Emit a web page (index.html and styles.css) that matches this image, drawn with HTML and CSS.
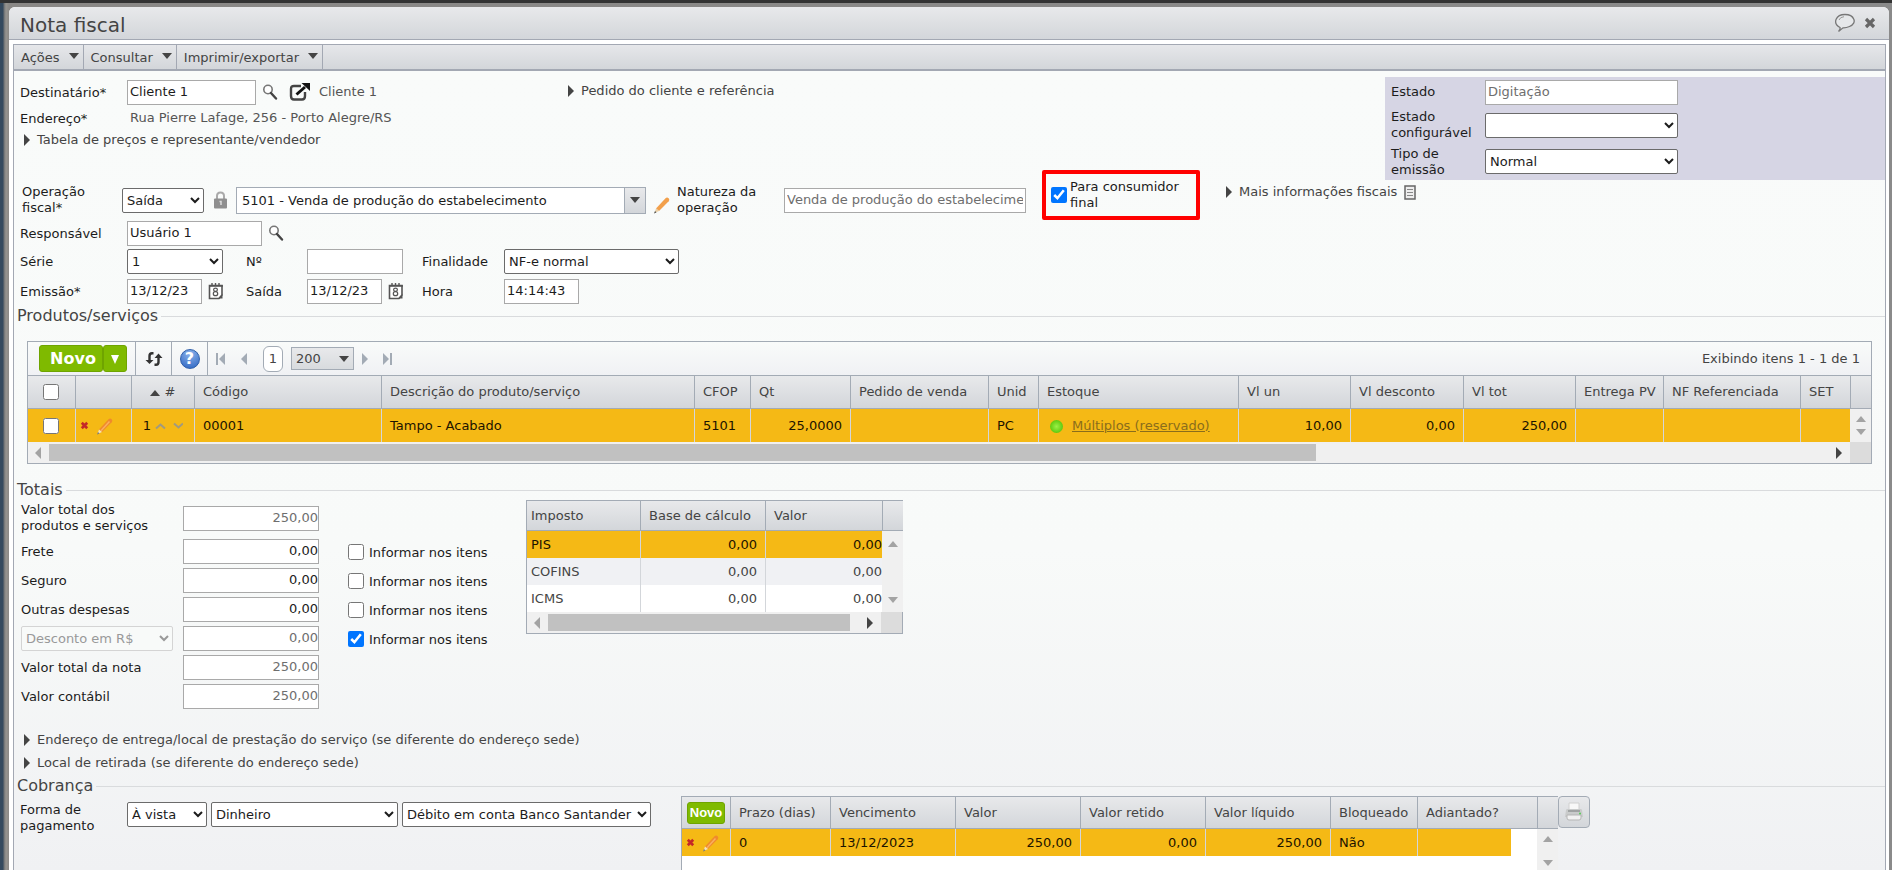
FILE: index.html
```
<!DOCTYPE html>
<html lang="pt-BR">
<head>
<meta charset="utf-8">
<meta name="viewport" content="width=device-width, initial-scale=1.0">
<title>Nota fiscal</title>
<link rel="stylesheet" href="styles.css">
</head>
<body>
<!-- shared icons -->
<svg class="sprite">
  <symbol id="i-search" viewBox="0 0 16 16"><circle cx="6" cy="5.5" r="4.2" fill="#fff" stroke="#777" stroke-width="1.6"/><path d="M9 9l5 5.5" stroke="#444" stroke-width="2.4" stroke-linecap="round"/></symbol>
  <symbol id="i-cal" viewBox="0 0 16 18"><path d="M1.5 3.5h12.5v9.500l-3 3.500h-9.500z" fill="#fff" stroke="#555" stroke-width="1.6"/><path d="M1 4h14M4 1v3M7.500 1v3M11 1v3" stroke="#555" stroke-width="1.4"/><ellipse cx="7.500" cy="7.800" rx="1.900" ry="1.600" fill="none" stroke="#555" stroke-width="1.200"/><ellipse cx="7.500" cy="11.700" rx="2.200" ry="2" fill="none" stroke="#555" stroke-width="1.200"/><path d="M10 16.500l4.500-4.500v4.500z" fill="#555"/></symbol>
  <symbol id="i-pencil" viewBox="0 0 18 18"><path d="M3 12.500L12.500 2.200q1.500-1.500 3.200 0q1.300 1.600 0 3.100L6 15z" fill="#f2a04c"/><path d="M3 12.500l3 2.500-4.500 2z" fill="#e8cfa6"/><path d="M1 17.500l2.500-1-1.500-1.500z" fill="#555"/></symbol>
  <symbol id="i-pencil-row" viewBox="0 0 18 18"><path d="M3 12.500L12.500 2.200q1.500-1.500 3.200 0q1.300 1.600 0 3.100L6 15z" fill="#f08a2c"/><path d="M13.500 4.500L5 13.800" stroke="#f9b060" stroke-width="1.500"/><path d="M3 12.500l3 2.500-4.500 2z" fill="#f3e2bd"/><path d="M1 17.500l2.500-1-1.500-1.500z" fill="#777"/></symbol>
  <symbol id="i-del" viewBox="0 0 10 10"><path d="M2 2l6 6M8 2l-6 6" stroke="#c52828" stroke-width="3"/></symbol>
  <symbol id="i-right" viewBox="0 0 6 12"><path d="M0 0l6 6-6 6z" fill="currentColor"/></symbol>
  <symbol id="i-left" viewBox="0 0 6 12"><path d="M6 0L0 6l6 6z" fill="currentColor"/></symbol>
  <symbol id="i-down" viewBox="0 0 10 6"><path d="M0 0h10L5 6z" fill="currentColor"/></symbol>
  <symbol id="i-up" viewBox="0 0 10 6"><path d="M0 6h10L5 0z" fill="currentColor"/></symbol>
</svg>

<div class="window">
  <header class="titlebar">
    <h1>Nota fiscal</h1>
    <button class="icon-btn" aria-label="Comentários"><svg width="22" height="20" viewBox="0 0 22 20"><path d="M6 14.500C-2 10 2 1.500 11 1.500s13 8.500 4.500 12q-3.500 1.500-6.500 1.300L4.500 18.500Q6.500 16.500 6 14.500z" fill="#e6e8ea" stroke="#777" stroke-width="1.300"/><path d="M5 7q1-3 5-3.300" fill="none" stroke="#999"/></svg></button>
    <button class="icon-btn" aria-label="Fechar"><svg width="12" height="12" viewBox="0 0 12 12"><path d="M2 2l8 8M10 2l-8 8" stroke="#666" stroke-width="3.200"/></svg></button>
  </header>

  <nav class="menu">
    <button>Ações <svg width="10" height="6"><use href="#i-down"/></svg></button>
    <button>Consultar <svg width="10" height="6"><use href="#i-down"/></svg></button>
    <button>Imprimir/exportar <svg width="10" height="6"><use href="#i-down"/></svg></button>
  </nav>

  <main class="content">
    <div class="top">
      <div class="recipient">
        <div class="row">
          <label class="lbl" for="dest">Destinatário*</label>
          <input class="w-dest" id="dest" value="Cliente 1">
          <button class="icon-btn find" aria-label="Buscar destinatário"><svg width="16" height="16"><use href="#i-search"/></svg></button>
          <button class="icon-btn open" aria-label="Abrir cadastro"><svg width="22" height="18" viewBox="0 0 22 18"><path d="M12 3H5Q2 3 2 6v7q0 3.500 3 3.500h8q3 0 3-3.500V9" fill="none" stroke="#444" stroke-width="2.400"/><path d="M7.500 11.500L16 4" stroke="#111" stroke-width="3"/><path d="M12.500 0H21v8z" fill="#111"/></svg></button>
          <span class="soft">Cliente 1</span>
        </div>
        <div class="row address">
          <span class="lbl">Endereço*</span>
          <span class="soft">Rua Pierre Lafage, 256 - Porto Alegre/RS</span>
        </div>
        <a class="toggle" href="#"><svg width="6" height="12"><use href="#i-right"/></svg>Tabela de preços e representante/vendedor</a>
      </div>
      <div class="order">
        <a class="toggle" href="#"><svg width="6" height="12"><use href="#i-right"/></svg>Pedido do cliente e referência</a>
      </div>
      <div class="status">
        <label for="estado">Estado</label>
        <input id="estado" class="muted" value="Digitação" readonly>
        <label for="config">Estado configurável</label>
        <select id="config"><option></option></select>
        <label for="tipo">Tipo de emissão</label>
        <select id="tipo"><option>Normal</option></select>
      </div>
    </div>

    <div class="row operation">
      <label class="lbl" for="oper">Operação fiscal*</label>
      <select id="oper"><option>Saída</option></select>
      <svg class="lock" width="15" height="18" viewBox="0 0 15 18"><path d="M4 8V5q0-3.500 3.500-3.500T11 5v3" fill="none" stroke="#aaa" stroke-width="2"/><rect x="1" y="7.500" width="13" height="10" rx="1" fill="#8f8f8f"/><path d="M6.500 10.500h1.500V14" fill="none" stroke="#ddd" stroke-width="1.500"/></svg>
      <div class="combo">
        <input aria-label="Código da operação" value="5101 - Venda de produção do estabelecimento">
        <button aria-label="Abrir lista"><svg width="10" height="6"><use href="#i-down"/></svg></button>
      </div>
      <button class="icon-btn edit-op" aria-label="Editar operação"><svg width="18" height="18"><use href="#i-pencil"/></svg></button>
      <label class="nature-lbl" for="natureza">Natureza da operação</label>
      <input id="natureza" class="muted" value="Venda de produção do estabelecimento" readonly>
      <label class="consumer"><input type="checkbox" checked><span>Para consumidor final</span></label>
      <a class="toggle more" href="#"><svg width="6" height="12"><use href="#i-right"/></svg>Mais informações fiscais<svg width="12" height="15" viewBox="0 0 12 15"><rect x="1" y="1" width="10" height="13" fill="#eee" stroke="#666" stroke-width="1.500"/><path d="M3 4.500h6M3 7.500h6M3 10.500h6" stroke="#888"/></svg></a>
    </div>

    <div class="row responsible">
      <label class="lbl" for="resp">Responsável</label>
      <input class="w-resp" id="resp" value="Usuário 1">
      <button class="icon-btn find" aria-label="Buscar responsável"><svg width="16" height="16"><use href="#i-search"/></svg></button>
    </div>

    <div class="issue">
      <label for="serie">Série</label>
      <div><select class="w-serie" id="serie"><option>1</option></select></div>
      <label for="num">Nº</label>
      <div><input class="w-serie" id="num"></div>
      <label for="final">Finalidade</label>
      <div><select class="w-final" id="final"><option>NF-e normal</option></select></div>

      <label for="emissao">Emissão*</label>
      <div><input class="w-date" id="emissao" value="13/12/23"><button class="icon-btn" aria-label="Calendário"><svg width="16" height="18"><use href="#i-cal"/></svg></button></div>
      <label for="saida">Saída</label>
      <div><input class="w-date" id="saida" value="13/12/23"><button class="icon-btn" aria-label="Calendário"><svg width="16" height="18"><use href="#i-cal"/></svg></button></div>
      <label for="hora">Hora</label>
      <div><input class="w-date" id="hora" value="14:14:43"></div>
    </div>

    <h2>Produtos/serviços</h2>
    <div class="grid products">
      <div class="toolbar">
        <div class="tb-group"><div class="new"><button>Novo</button><button aria-label="Mais opções"><svg width="8" height="9" viewBox="0 0 8 9"><path d="M0 0h8L4 9z" fill="#fff"/></svg></button></div></div>
        <div class="tb-group"><button class="icon-btn" aria-label="Atualizar"><svg width="18" height="14" viewBox="0 0 18 14"><path d="M8.500 1.200H7Q4.500 1.200 4.500 4v5M9.500 12.800H11q2.500 0 2.500-2.800V5" fill="none" stroke="#333" stroke-width="2.400"/><path d="M.5 8h8l-4 4zM9.500 6h8l-4-4.500z" fill="#333"/></svg></button></div>
        <div class="tb-group"><button class="help" aria-label="Ajuda">?</button></div>
        <div class="pager">
          <button class="icon-btn" aria-label="Primeira"><svg width="9" height="12" viewBox="0 0 9 12"><path d="M1 0v12" stroke="#a3abb5" stroke-width="2"/><path d="M9 0L3 6l6 6z" fill="#a3abb5"/></svg></button>
          <button class="icon-btn" aria-label="Anterior"><svg width="6" height="12"><use href="#i-left"/></svg></button>
          <button class="page">1</button>
          <div class="size"><select aria-label="Itens por página"><option>200</option></select><svg width="10" height="6"><use href="#i-down"/></svg></div>
          <button class="icon-btn" aria-label="Próxima"><svg width="6" height="12"><use href="#i-right"/></svg></button>
          <button class="icon-btn last" aria-label="Última"><svg width="9" height="12" viewBox="0 0 9 12"><path d="M8 0v12" stroke="#a3abb5" stroke-width="2"/><path d="M0 0l6 6-6 6z" fill="#a3abb5"/></svg></button>
        </div>
        <span class="showing">Exibindo itens 1 - 1 de 1</span>
      </div>
      <table>
        <colgroup>
          <col class="c47"><col class="c56"><col class="c63"><col class="c187"><col class="c313"><col class="c56"><col class="c100"><col class="c138"><col class="c50"><col class="c200"><col class="c112"><col class="c113"><col class="c112"><col class="c88"><col class="c137"><col class="c50"><col class="c21">
        </colgroup>
        <tr>
          <th class="check"><input type="checkbox" aria-label="Selecionar todos"></th>
          <th></th>
          <th class="mid"><svg width="10" height="6"><use href="#i-up"/></svg> #</th>
          <th>Código</th><th>Descrição do produto/serviço</th><th>CFOP</th><th>Qt</th><th>Pedido de venda</th><th>Unid</th><th>Estoque</th><th>Vl un</th><th>Vl desconto</th><th>Vl tot</th><th>Entrega PV</th><th>NF Referenciada</th><th>SET</th><th></th>
        </tr>
        <tr class="selected">
          <td class="check"><input type="checkbox" aria-label="Selecionar item 1"></td>
          <td class="tools"><div><button class="icon-btn" aria-label="Excluir"><svg width="9" height="9"><use href="#i-del"/></svg></button><button class="icon-btn" aria-label="Editar"><svg width="18" height="18"><use href="#i-pencil-row"/></svg></button></div></td>
          <td class="mid">1 <svg width="28" height="8" viewBox="0 0 28 8"><path d="M1 6.500L5.500 2.500 10 6.500M19 1.500l4.500 4 4.500-4" fill="none" stroke="#a09a80" stroke-width="2"/></svg></td>
          <td>00001</td><td>Tampo - Acabado</td><td>5101</td><td class="num">25,0000</td><td></td><td>PC</td>
          <td class="stock"><i class="dot"></i><a href="#">Múltiplos (reservado)</a></td>
          <td class="num">10,00</td><td class="num">0,00</td><td class="num">250,00</td><td></td><td></td><td></td>
          <td class="vscroll"><div><svg width="10" height="6"><use href="#i-up"/></svg><svg width="10" height="6"><use href="#i-down"/></svg></div></td>
        </tr>
      </table>
      <div class="hscroll"><svg width="6" height="12"><use href="#i-left"/></svg><div class="track"><div class="thumb" style="width: 71.2%"></div></div><svg class="on" width="6" height="12"><use href="#i-right"/></svg><div class="corner"></div></div>
    </div>

    <h2>Totais</h2>
    <div class="totals">
      <div class="sums">
        <div class="sum first"><label for="t1">Valor total dos produtos e serviços</label><input id="t1" class="muted" value="250,00" readonly></div>
        <div class="sum"><label for="t2">Frete</label><input id="t2" value="0,00"><label class="inform"><input type="checkbox"><span>Informar nos itens</span></label></div>
        <div class="sum"><label for="t3">Seguro</label><input id="t3" value="0,00"><label class="inform"><input type="checkbox"><span>Informar nos itens</span></label></div>
        <div class="sum"><label for="t4">Outras despesas</label><input id="t4" value="0,00"><label class="inform"><input type="checkbox"><span>Informar nos itens</span></label></div>
        <div class="sum"><select class="discount" aria-label="Tipo de desconto" disabled><option>Desconto em R$</option></select><input class="muted" aria-label="Desconto" value="0,00" readonly><label class="inform"><input type="checkbox" checked><span>Informar nos itens</span></label></div>
        <div class="sum"><label for="t6">Valor total da nota</label><input id="t6" class="muted" value="250,00" readonly></div>
        <div class="sum"><label for="t7">Valor contábil</label><input id="t7" class="muted" value="250,00" readonly></div>
      </div>
      <div class="grid taxes">
        <table>
          <colgroup><col class="c113"><col class="c125"><col class="c117"><col class="c21"></colgroup>
          <tr><th>Imposto</th><th>Base de cálculo</th><th>Valor</th><th></th></tr>
          <tr class="selected"><td>PIS</td><td class="num">0,00</td><td class="num">0,00</td><td class="vscroll" rowspan="3"><div><svg width="10" height="6"><use href="#i-up"/></svg><svg width="10" height="6"><use href="#i-down"/></svg></div></td></tr>
          <tr class="alt"><td>COFINS</td><td class="num">0,00</td><td class="num">0,00</td></tr>
          <tr><td>ICMS</td><td class="num">0,00</td><td class="num">0,00</td></tr>
        </table>
        <div class="hscroll"><svg width="6" height="12"><use href="#i-left"/></svg><div class="track"><div class="thumb" style="width: 97%"></div></div><svg class="on" width="6" height="12"><use href="#i-right"/></svg><div class="corner"></div></div>
      </div>
    </div>

    <div class="links">
      <a class="toggle" href="#"><svg width="6" height="12"><use href="#i-right"/></svg>Endereço de entrega/local de prestação do serviço (se diferente do endereço sede)</a>
      <a class="toggle" href="#"><svg width="6" height="12"><use href="#i-right"/></svg>Local de retirada (se diferente do endereço sede)</a>
    </div>

    <h2>Cobrança</h2>
    <div class="billing">
      <div class="payment">
        <label for="forma">Forma de pagamento</label>
        <select class="w-forma" id="forma"><option>À vista</option></select>
        <select class="w-meio" aria-label="Meio de pagamento"><option>Dinheiro</option></select>
        <select class="w-conta" aria-label="Conta"><option>Débito em conta Banco Santander</option></select>
      </div>
      <div class="grid parcels">
        <table>
          <colgroup><col class="c48"><col class="c100"><col class="c125"><col class="c125"><col class="c125"><col class="c125"><col class="c87"><col class="c94"><col class="c26"><col class="c21"></colgroup>
          <tr><th class="add"><button>Novo</button></th><th>Prazo (dias)</th><th>Vencimento</th><th>Valor</th><th>Valor retido</th><th>Valor líquido</th><th>Bloqueado</th><th colspan="2">Adiantado?</th><th></th></tr>
          <tr class="selected">
            <td class="tools"><div><button class="icon-btn" aria-label="Excluir"><svg width="9" height="9"><use href="#i-del"/></svg></button><button class="icon-btn" aria-label="Editar"><svg width="18" height="18"><use href="#i-pencil-row"/></svg></button></div></td>
            <td>0</td><td>13/12/2023</td><td class="num">250,00</td><td class="num">0,00</td><td class="num">250,00</td><td>Não</td><td></td><td class="blank"></td>
            <td class="vscroll" rowspan="2"><div><svg width="10" height="6"><use href="#i-up"/></svg><svg width="10" height="6"><use href="#i-down"/></svg></div></td>
          </tr>
          <tr class="rest"><td class="blank" colspan="9"></td></tr>
        </table>
      </div>
      <button class="print" aria-label="Imprimir"><svg width="20" height="20" viewBox="0 0 20 20"><path d="M5 1h10v8H5z" fill="#f8f8f8" stroke="#d0d0d0"/><path d="M2 8q0-1 2-1h12q2 0 2 1l1 7H1z" fill="#c9cbcb"/><path d="M4 8h12v2H4z" fill="#a0a3a3"/><path d="M3 13h14v3q0 2-2 2H5q-2 0-2-2z" fill="#f2f2f2" stroke="#b5b5b5"/><circle cx="16" cy="11.500" r="1" fill="#5c5"/></svg></button>
    </div>
  </main>
</div>
</body>
</html>
```

FILE: styles.css
```
* {
  box-sizing: border-box;
}
body {
  margin: 0;
  height: 100vh;
  overflow: hidden;
  display: flex;
  flex-direction: column;
  padding: 4px 3px 0 9px;
  border-top: 3px solid #333;
  background: linear-gradient(to right, #34495e 3px, #6d7073 4px, #969490 6px, #8a8886 9px, #8a8a8a);
  font: 13px/16px "DejaVu Sans", Verdana, sans-serif;
  color: #1c1c1c;
}
.sprite {
  position: absolute;
  width: 0;
  height: 0;
}
svg {
  flex: none;
}
h1, h2 {
  margin: 0;
  font-weight: normal;
  color: #444;
}
a {
  color: #444;
  text-decoration: none;
}
button {
  font: inherit;
  color: #444;
  cursor: pointer;
}
.icon-btn {
  display: inline-flex;
  padding: 0;
  border: 0;
  background: none;
}

.window {
  flex: 1;
  min-height: 0;
  display: flex;
  flex-direction: column;
  background: #fff;
  border-radius: 6px 6px 0 0;
  overflow: hidden;
}
.titlebar {
  display: flex;
  align-items: center;
  gap: 8px;
  flex: none;
  height: 33px;
  padding: 0 13px 0 11px;
  border-bottom: 1px solid #a3a8b3;
  background: linear-gradient(#e8e9eb, #d3d6da);
}
.titlebar h1 {
  flex: 1;
  padding-top: 4px;
  font-size: 20px;
  line-height: 24px;
}
.menu {
  display: flex;
  flex: none;
  height: 27px;
  margin: 4px 3px 0 4px;
  border: 1px solid #a3a8b3;
  border-bottom-width: 2px;
  background: linear-gradient(#e6e7ea, #d3d6da);
}
.menu button {
  display: flex;
  align-items: center;
  gap: 9px;
  padding: 2px 4px 0 7px;
  border: 0;
  border-right: 1px solid #a3a8b3;
  background: none;
}
.menu svg {
  margin-bottom: 4px;
}
.content {
  flex: 1;
  min-height: 0;
  overflow: hidden;
  margin: 0 3px 0 4px;
  padding-top: 6px;
  border: 1px solid #a3a8b3;
  border-width: 0 1px;
  background: linear-gradient(#f9fbfa, #f8faf9 60%, #f0f1f3);
}

/* fields */
input, select {
  font: inherit;
  color: #1c1c1c;
  background: #fff;
}
input:not([type]) {
  height: 25px;
  padding: 0 2px 2px;
  border: 1px solid #a9a9a9;
}
select {
  height: 25px;
  padding: 0;
  border: 1px solid #6b6b6b;
  border-radius: 2px;
}
select:disabled {
  color: #999;
  border-color: #d4d4d4;
  background: #f8faf9;
  opacity: 1;
}
input[type=checkbox] {
  flex: none;
  width: 16px;
  height: 16px;
  margin: 0;
}
.content input.muted {
  color: #6e6e6e;
}
.soft {
  color: #555;
}
.row {
  display: flex;
  align-items: center;
  height: 30px;
}
.lbl {
  flex: none;
  width: 107px;
  padding: 2px 20px 0 0;
}
.toggle {
  display: flex;
  align-items: center;
  gap: 7px;
  white-space: nowrap;
}
.find {
  margin-left: 6px;
}
.w-dest { width: 129px; }
.w-resp { width: 135px; }
.w-serie { width: 96px; }
.w-date { width: 75px; }
.w-final { width: 175px; }

.top {
  display: grid;
  grid-template-columns: 554px 1fr 500px;
  min-height: 103px;
}
.recipient {
  padding-left: 6px;
}
.recipient .lbl {
  padding-right: 0;
}
.open {
  margin: 0 8px 0 11px;
}
.address {
  height: 22px;
}
.address .soft {
  padding-left: 3px;
}
.recipient .toggle {
  padding: 3px 4px;
}
.order {
  padding-top: 6px;
}
.status {
  display: grid;
  grid-template-columns: 94px 193px;
  grid-template-rows: 30px 1fr 1fr;
  align-items: center;
  padding-left: 6px;
  background: #d6d5e4;
}

.operation {
  height: 40px;
  padding-left: 8px;
}
.operation .lbl {
  width: 100px;
  padding: 0 20px 0 0;
}
#oper {
  width: 82px;
}
.lock {
  margin: 0 8px 0 9px;
}
.combo {
  display: flex;
  flex: none;
  width: 410px;
  height: 27px;
  border: 1px solid #a3abb5;
}
.content .combo input {
  flex: 1;
  height: 100%;
  min-width: 0;
  padding: 0 5px;
  border: 0;
}
.combo button {
  width: 21px;
  padding: 0;
  border: 0;
  border-left: 1px solid #a3abb5;
  background: linear-gradient(#e8e9eb, #d3d6da);
}
.combo button svg {
  display: block;
  margin: auto;
}
.edit-op {
  margin: 10px 6px 0 7px;
}
.nature-lbl {
  flex: none;
  width: 107px;
}
#natureza {
  flex: none;
  width: 242px;
}
.consumer {
  display: flex;
  flex: none;
  align-items: center;
  gap: 3px;
  width: 158px;
  height: 50px;
  margin: 0 26px 10px 16px;
  padding: 0 8px 0 5px;
  border: 4px solid #f00;
  border-radius: 2px;
}
.more {
  margin-bottom: 16px;
}
.responsible {
  height: 26px;
  padding-left: 6px;
}
.issue {
  display: grid;
  grid-template-columns: 107px 119px 61px 115px 82px 1fr;
  grid-auto-rows: 30px;
  align-items: center;
  padding-left: 6px;
}
.issue label {
  padding-top: 2px;
}
.issue div {
  display: flex;
  align-items: center;
  gap: 6px;
}

h2 {
  display: flex;
  align-items: center;
  gap: 3px;
  padding-left: 3px;
  font-size: 16px;
  line-height: 20px;
}
h2::after {
  content: "";
  flex: 1;
  border-top: 1px solid #d9dbdd;
}

/* data grids */
.grid {
  border: 1px solid #a3abb5;
  color: #444;
}
.grid table {
  width: 100%;
  table-layout: fixed;
  border-collapse: separate;
  border-spacing: 0;
}
.grid th, .grid td {
  height: 33px;
  padding: 0 0 0 8px;
  border-left: 1px solid #d3d6da;
  text-align: left;
  font-weight: normal;
  white-space: nowrap;
}
.grid th {
  border-left-color: #a3abb5;
  border-bottom: 1px solid #a3abb5;
  background: linear-gradient(#e8e9eb, #d3d6da);
}
.grid th:first-child, .grid td:first-child {
  border-left: 0;
}
.grid .num {
  padding: 0 8px 0 0;
  text-align: right;
}
.selected td {
  background: #f5b915;
  color: #1c1400;
}
.alt td {
  background: #f0f1f4;
}
.grid .vscroll {
  padding: 7px 0;
  border-left: 0;
  background: #f0f0f0;
  color: #a3a3a3;
}
.vscroll div {
  display: flex;
  flex-direction: column;
  justify-content: space-between;
  align-items: center;
  height: 19px;
}
.hscroll {
  display: flex;
  align-items: center;
  gap: 8px;
  height: 21px;
  padding-left: 7px;
  background: #f0f0f0;
  color: #a3a3a3;
}
.hscroll .on {
  color: #444;
}
.track {
  flex: 1;
}
.thumb {
  height: 17px;
  background: #c1c1c1;
}
.corner {
  width: 21px;
  height: 100%;
  background: #dcdcdc;
}
.c21 { width: 21px; }
.c26 { width: 26px; }
.c47 { width: 47px; }
.c48 { width: 48px; }
.c50 { width: 50px; }
.c56 { width: 56px; }
.c63 { width: 63px; }
.c87 { width: 87px; }
.c88 { width: 88px; }
.c94 { width: 94px; }
.c100 { width: 100px; }
.c112 { width: 112px; }
.c113 { width: 113px; }
.c117 { width: 117px; }
.c125 { width: 125px; }
.c137 { width: 137px; }
.c138 { width: 138px; }
.c187 { width: 187px; }
.c200 { width: 200px; }
.c313 { width: 313px; }

.products {
  margin: 15px 13px 16px;
}
.products td {
  height: 32px;
}
.toolbar {
  display: flex;
  align-items: center;
  height: 34px;
  border-bottom: 1px solid #a3abb5;
  background: linear-gradient(#f9fbfa, #f0f1f4);
}
.tb-group {
  display: flex;
  align-items: center;
  justify-content: center;
  width: 36px;
  height: 33px;
  border-right: 1px solid #a3abb5;
}
.tb-group:first-child {
  width: 108px;
  padding-left: 3px;
}
.new {
  display: flex;
}
.new button {
  height: 27px;
  padding: 0 6px 0 10px;
  border: 1px solid #6fa400;
  border-radius: 3px;
  background: #7fba00;
  color: #fff;
  font-size: 16px;
  font-weight: bold;
}
.new button + button {
  padding: 0 7px;
}
.help {
  width: 20px;
  height: 20px;
  padding: 0;
  border: 1px solid #2f5faa;
  border-radius: 50%;
  background: radial-gradient(circle at 50% 20%, #8db4ec, #2a62c0);
  color: #fff;
  font-size: 16px;
  font-weight: bold;
}
.pager {
  display: flex;
  align-items: center;
  gap: 8px;
  padding-left: 8px;
}
.pager .icon-btn {
  color: #a3abb5;
}
.pager button:nth-child(2) {
  margin: 0 8px;
}
.page {
  width: 20px;
  height: 26px;
  padding: 0;
  border: 1px solid #a3abb5;
  border-radius: 6px;
  background: #fff;
}
.size {
  display: grid;
  align-items: center;
  color: #444;
}
.size select, .size svg {
  grid-area: 1 / 1;
}
.size select {
  appearance: none;
  width: 63px;
  height: 23px;
  padding: 0 4px;
  border: 1px solid #a3abb5;
  border-radius: 0;
  background: linear-gradient(#e8e9eb, #d8dbde);
  color: #444;
}
.size svg {
  justify-self: end;
  margin-right: 5px;
  pointer-events: none;
}
.last {
  margin-left: 7px;
}
.showing {
  margin-left: auto;
  padding-right: 11px;
}
.grid .check {
  padding: 0 0 0 15px;
}
.check input {
  display: block;
}
.grid .mid {
  padding: 0;
  text-align: center;
}
.mid svg {
  vertical-align: middle;
}
.grid .tools {
  padding: 0 0 0 4px;
}
.tools div {
  display: flex;
  align-items: center;
  gap: 7px;
}
.dot {
  display: inline-block;
  width: 13px;
  height: 13px;
  margin: 0 9px 0 3px;
  border-radius: 50%;
  background: radial-gradient(#9cf046, #5cc80c 75%);
  vertical-align: middle;
}
.stock a {
  color: #8a6d1c;
  text-decoration: underline;
}

.totals {
  display: flex;
  align-items: flex-start;
}
.sums {
  flex: none;
  width: 512px;
  padding: 1px 0 0 7px;
}
.sum {
  display: grid;
  grid-template-columns: 162px 136px 1fr;
  align-items: center;
  padding-bottom: 4px;
}
.sum.first {
  height: 38px;
}
.sum > label:first-child {
  max-width: 140px;
}
.sum > input {
  text-align: right;
  padding-right: 0;
}
.sum .inform {
  display: flex;
  align-items: center;
  gap: 5px;
  padding-left: 29px;
}
.inform span {
  padding-top: 3px;
}
.discount {
  width: 152px;
}
.taxes {
  width: 377px;
}
.taxes th {
  height: 30px;
}
.taxes td {
  height: 27px;
}
.taxes td, .parcels td {
  background: #fff;
}
.taxes .selected td, .parcels .selected td {
  background: #f5b915;
}
.taxes .alt td {
  background: #f0f1f4;
}
.taxes th:first-child, .taxes td:first-child {
  padding-left: 4px;
}
.grid.taxes td:nth-child(3) {
  padding-right: 0;
}
.grid.taxes .vscroll, .grid.parcels .vscroll {
  background: #f0f0f0;
}
.taxes .vscroll div {
  height: 62px;
}

.links {
  display: flex;
  flex-direction: column;
  gap: 7px;
  padding: 19px 0 5px 10px;
}

.billing {
  display: flex;
  align-items: flex-start;
}
.payment {
  display: flex;
  flex: none;
  gap: 4px;
  width: 667px;
  padding: 6px 0 0 6px;
}
.payment label {
  width: 103px;
  padding-right: 10px;
}
.w-forma { width: 80px; }
.w-meio { width: 187px; }
.w-conta { width: 249px; }
.parcels {
  width: 877px;
}
.parcels th {
  height: 32px;
}
.grid.parcels td {
  height: 27px;
}
.grid.parcels .rest td {
  height: 60px;
}
.grid .blank, .grid .selected .blank {
  border-left: 0;
  background: #fff;
}
.grid.parcels .vscroll {
  vertical-align: top;
}
.parcels .vscroll div {
  height: 30px;
}
.grid .add {
  padding: 0;
  text-align: center;
}
.add button {
  height: 22px;
  padding: 0;
  width: 38px;
  border: 1px solid #6fa400;
  border-radius: 3px;
  background: #7fba00;
  color: #fff;
  font-family: "Liberation Sans", sans-serif;
  font-weight: bold;
}
.print {
  width: 32px;
  height: 32px;
  padding: 0;
  border: 1px solid #a3abb5;
  border-radius: 4px;
  background: linear-gradient(#e8e9eb, #d3d6da);
}
.print svg {
  display: block;
  margin: auto;
}
```
